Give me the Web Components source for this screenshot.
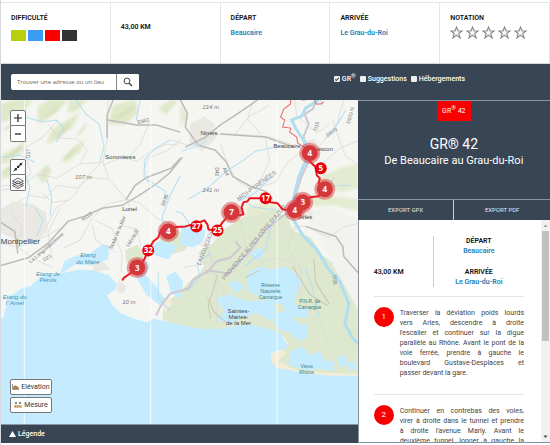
<!DOCTYPE html>
<html lang="fr">
<head>
<meta charset="utf-8">
<meta name="viewport" content="width=device-width, initial-scale=1">
<title>GR® 42 - De Beaucaire au Grau-du-Roi</title>
<style>
html,body{height:100%}
body{margin:0;background:#fff;font:8px/10px Roboto,"Liberation Sans",sans-serif;color:#111;--navy:#384554;--blue:#1c80b5;--red:#f80000;--line:#e2e4e6}
</style>
</head>
<body>
<hike-page></hike-page>
<script>
const define=(name,html,setup)=>customElements.define(name,class extends HTMLElement{
  constructor(){super();this.attachShadow({mode:'open'}).innerHTML=html;}
  connectedCallback(){if(setup)setup.call(this,this.shadowRoot);}
});

define('fact-cell',`<style>
:host{display:block;flex:1 1 0;min-width:0;box-sizing:border-box;padding:10px 10px 8px;border-right:1px solid var(--line);font-size:8px}
:host([centered]){display:flex;align-items:center;padding:0 10px 12px}
h2{font:inherit;font-weight:600;font-size:7px;margin:0 0 3px}
h2:empty{display:none}
</style><h2></h2><slot></slot>`,function(r){r.querySelector('h2').textContent=this.getAttribute('heading')||'';});

define('difficulty-scale',`<style>
:host{display:flex;gap:2px;padding-top:4px}
i{width:15px;height:11px}
</style><i style="background:#b8cf0c"></i><i style="background:#3b9af2"></i><i style="background:#f80000"></i><i style="background:#333"></i>`);

define('star-rating',`<style>
:host{display:flex;gap:3px}
svg{width:13px;height:13px;fill:none;stroke:#8c8c8c;stroke-width:1.200}
</style>`+'<svg viewBox="0 0 13 13"><path d="M6.500 1l1.500 4h4L8.800 7.500l1.300 4.200L6.500 9.200l-3.600 2.500L4.200 7.500 1 5h4z"/></svg>'.repeat(5));

define('search-box',`<style>
:host{display:block;width:128px}
form{display:flex;height:16px;margin:0;background:#fff;border-radius:2px;overflow:hidden}
input{flex:1;min-width:0;border:0;padding:0 6px;font:6px/16px "Open Sans",sans-serif;background:none;outline:0}
input::placeholder{color:#666;opacity:1}
button{width:23px;border:0;border-left:1px solid #888;padding:0;background:#fff;display:grid;place-items:center}
svg{width:10px;height:10px;fill:none;stroke:#444;stroke-width:1}
</style><form role="search"><input type="text" aria-label="Trouver une adresse ou un lieu" placeholder="Trouver une adresse ou un lieu"><button type="button" aria-label="Rechercher"><svg viewBox="0 0 10 10"><circle cx="4" cy="4" r="2.900"/><path d="M6.200 6.200L9 9" stroke-width="1.500"/></svg></button></form>`);

define('layer-toggle',`<style>
:host{display:block}
label{display:flex;align-items:center;gap:2px;color:#fff;font-size:7px;font-weight:500;white-space:nowrap}
input{appearance:none;width:6px;height:6px;margin:0;background:#eee;border-radius:1px;display:grid;place-items:center}
input:checked::after{content:"";width:3px;height:1px;border:solid #333;border-width:0 0 1px 1px;transform:rotate(-45deg)}
::slotted(sup){font-size:6px;line-height:0}
</style><label><input type="checkbox"><span><slot></slot></span></label>`,function(r){r.querySelector('input').checked=this.hasAttribute('checked');});

define('map-button',`<style>
:host{display:block}
button{font:7px/14px Roboto,sans-serif;color:#333;background:#fff;border:1px solid #777;border-radius:2px;box-sizing:border-box;width:42px;height:16px;padding:0 3px;display:flex;align-items:center;justify-content:center;gap:2px}
:host([square]) button{width:16px;padding:0}
:host([first]) button{border-radius:2px 2px 0 0}
:host([last]) button{border-radius:0 0 2px 2px;border-top:0}
::slotted(svg){flex:none;display:block}
</style><button type="button"><slot></slot></button>`,function(r){if(this.title)r.querySelector('button').setAttribute('aria-label',this.title);});

const big=[[309,153,4],[324,189,4],[302,202,3],[294,210,4],[231,212,7],[168,231,4],[137,267,3]];
const small=[[320,168,5],[265,198,17],[217,230,25],[196,226,27],[148,250,32]];
const pin=([x,y,n],b)=>`<g>${b?`<circle cx="${x}" cy="${y}" r="10.500" fill="#d73b3f" opacity=".5"/><circle cx="${x}" cy="${y}" r="8" fill="#d5383b"/>`:`<circle cx="${x}" cy="${y}" r="6" fill="#e90007"/>`}<text x="${x}" y="${y+3}" class="pin">${n}</text></g>`;

define('trail-map',`<style>
:host{display:block;position:relative;overflow:hidden;background:#c5ebff;min-height:0}
.base{position:absolute;inset:0;width:100%;height:100%;display:block}
.zoom,.tools,.measure{position:absolute;left:9px}
.zoom{top:10px}.tools{top:59px}
.measure{bottom:11px;display:grid;gap:2px}
text{font-family:"Liberation Sans",sans-serif}
.town{font-size:6px;fill:#444}.water{font-size:6px;font-style:italic;fill:#3f93b3}
.alt{font-size:6px;font-style:italic;fill:#777}.park{font-size:5px;fill:#3e8079}.ref{font-size:5px;fill:#777}
.region{font-size:6px;fill:#8f8c98}
.pin{font-family:"Open Sans",sans-serif;font-size:8px;font-weight:700;fill:#fff;text-anchor:middle}
.minor{fill:none;stroke:#dadad8;stroke-width:.8}
.road{fill:none;stroke:#bbbbb9;stroke-width:1.500}
.river{fill:none;stroke:#b4dff2;stroke-width:1}
.lake{fill:#c5ebff}
.border{fill:none;stroke:#cfc8d3;stroke-width:2}
.mid{text-anchor:middle}
</style>
<svg class="base" viewBox="1 100 356 323" preserveAspectRatio="xMidYMid slice" role="img" aria-label="Carte du GR 42">
<defs><filter id="soft" x="-20%" y="-20%" width="140%" height="140%"><feGaussianBlur stdDeviation="1.500"/></filter></defs>
<rect x="-300" y="-200" width="1000" height="1000" fill="#c5ebff"/>
<path fill="#f5f6f2" d="M-300-200H700V374H357l-27 0-20-2-25-4-13-6-1-7 4-5 9-1 3-4-7-13-15-5-20-4-24 5-21 0-25-5-21-5-5 1-1 3-14-4-14-6-8-8-5-9 9-7 1-5-8-8-14-5-16-1-18 4-16 5-16 9-12 13-12 15-13 15H-300z"/>
<g fill="#dfe8c8" filter="url(#soft)">
<path d="M1 104l12-4h20l-9 12-12 6-11 5zM38 106l12-6h18l-12 13-18 11zM52 130l15-10 13-8-7 14-15 13-12 6zM3 154l15-8 10-8-6 14-13 10-8 2zM60 160l16-14 9-8-4 12-14 12zM108 124l5-19 22-5 3 13-14 12zM3 170l17-8-8 14-11 3zM38 178l10-14 4 7-8 12zM70 100h18l-12 11-9 2zM158 108l12-8h8l-12 15z"/>
<path d="M319 176l20-8 18-5v25l-16 4-11-4-9 3zM306 196l20-1 31 4v12l-24-6-25 1zM246 205l20-3 18 8-21 5-18 3zM180 104l8 12-8 12z" opacity=".8"/>
</g>
<g fill="none" stroke="#cdd4b1" stroke-width="2" opacity=".7" filter="url(#soft)"><path d="M10 155l12-8M44 118l14-10M56 138l14-14M66 158l11-13M116 118l18-11M4 130l14-9M38 176l9-9M3 172l12-8M78 135l8-11"/></g>
<path fill="#dde8ce" d="M222 230l20-13 30-6 15 5 5 14 18 7 12 18 16 12 11 20 8 21V374H330l-20-2-25-4-13-6 0-8 13-6 2-6-7-10-15-5-20-4-24 5-21 0-25-5-13-4 2-16 16-12 8-9 12-10 4-7-6-13 15-10zM160 238l18-7 16 5-10 14-20 6-7-8zM125 250l12-6 7 9-4 12-14-4z"/>
<path fill="#f2f3ee" d="M310 224l15 24 8 18 14 25 10 18v-90l-30-12-20 6z"/>
<path fill="#f3edd8" d="M271 353l9-4 6 3-9 9 18 8 26 3 36 1v2h-28l-25-3-28-5-6-7zM160 300l8-5 4 8-7 8z"/>
<g class="lake">
<path d="M60 273l5-13 12-5 13-2 12-9 7 1-1 14-15 6-18-1-10 7zM29 287l12-11 11-4 5 7-13 5-8 6zM4 315l4-18 14-9 7-2-1 10-12 10-8 12zM132 263l14-2 4 5-5 8 11 12 8 12-3 8-15-12-9-16zM146 247l14-7 17 5-9 14-13-4zM181 226l13-2 11 6-2 11-10 6-13-3zM166 276l9-5 8 10-3 17-9-5zM247 272l12-6 12 3 14-3 10 7 6 9-5 8-1 9-9 4-16 0-6-6-16-6-2-8zM252 250l8-3 4 6-6 7-7-3zM227 283l9-3 8 6-8 7zM215 298l14-4 19 7 16-2 12 7-6 14-15-8-16 6-9 6-13-5 7-9zM278 296l9-3 8 11 13 5-2 8-18-1zM270 314l13-4 17 14 6-1 1 13-9 4-9-8-12-4zM289 351l12-5 10 9 8-5 5 10 10 1-2 9-14-2-12 2-18-6zM336 356l8-1 3 8-7 4zM346 363l7-2 3 6-7 3z"/>
</g>
<g fill="#e6e2dd"><path d="M1 209l12-8 20 3 13 8 2 18-12 12-18-2-17-8zM190 124l14-8 10 8 2 14-14 13-13-9zM302 141l12-2 5 9-7 10-9-6zM298 210l15 1-4 8-10 0zM92 262l12 0 7 7-17 2zM118 280l8 5-2 8-7-2z" opacity=".7"/></g>
<g class="minor">
<path d="M108 100l-1 38-4 24 6 17 17 20 6 12M103 162l-24 2-22 14-19-4-13 9-24 3M101 163l-14 13-13 20-18 12-10 19M80 165l7-15-9-11-18-1-12-14M109 179l-19-2-13 11-20-3-11 13-16-3-12 7M103 165l19-8 15 4 14-10 15-7 12 1M126 199l-20 5-14 14-12 22-16 7M150 120l-11 26-13 14M150 185l-8-11 6-16 18-7 15-12M1 190l20-3 10-15-8-23 20-12 15-17M69 200l-16 2-11-9M126 199l14 4 15 14 17 8M171 140l20 6 25-12 20 0 34 3 22 8M220 144l7 20 10 17 15 8 23-7 12-20 16-12M234 135l14-18 21-12M253 100l-6 19 18 20 4 22-12 25M310 155l12-13 14-18 7-24M319 166l20-18 18-7M280 240l16-14 9 0 23 11 14-10 15-4M208 240l4 28 4 18 0 35M240 220l6 32 13 8 20-2 15 5 4 27 8 18 13 14 11 26M295 224l-8 22 13 23 2 20M183 267l22-4 11-8M217 280l12 20 6 14M294 100l2 16 20 17 13-9M187 236l20 12 6 18M332 120l12 35 13 10"/>
<path d="M10 210l13 18-6 18 18 13 18 8M1 242l16 5 22-8 26-13M60 208l-12 24 5 28M95 220l17 8 10 26-1 18M122 225l15 4 4 17M115 252l-19-12-4-16"/>
</g>
<g class="road">
<path d="M-20 274l21-9 28-8 19-14 20-22 16-5 18-8 20-3 17-10 18-12 12-10 13-16M1 222l14 9 3 22M107 138l0-23 6-15M108 120l28 5 20 0 24 7M180 100l7 13-2 14 13 18 17 5 11 12 6 14 18 10 15 5 7 8M185 147l20-10 16-13 14-9 22-15M220 134l45 3 28 10M126 199l9-14 12-8 24-9 9-10M305 226l30 10 7 10 1 10 14 16"/>
</g>
<g class="river"><path d="M76 100l10 14 13 10 5 22-4 15M25 117l18 5 13-2 8 8-8 14M1 157l19-2 15 7M25 173l5 14-4 20M47 179l5 18-2 19M140 100l-4 19 4 6M170 140l-15 8-11 12 1 18 20 13-2 15M180 175l-10 20-8 21 2 16M181 151l16-5 10-5M188 199l20-12 18-16 17-11 12-9 27-6M192 228l-10-15-7-2M246 202l8 5 24 3M273 175l-19 18-16 8M35 207l8 13-6 16M158 272l0 26 12 12M210 253l-13 9 2 15-12 14M272 219l-7 30-20 16M305 268l7 20 6 28M318 300l-8 10M333 177l-5 9 21-1M345 110l-12 20-8 8M320 100l1 6"/></g>
<path class="border" d="M303 136l5-12-4-10 8-5 4-9M303 136l1 14 5 9-8 17-6 19-2 15M293 210l-10 5-19 15-14 20-22 23-20-3-15 9-5 9-18 5-10 13-4 9M235 241l5 6-10 10-14 4-10 12"/>
<path fill="none" stroke="#b0def1" stroke-width="3" d="M318 100l-13 8-4 8-10 4 5 10 9 13 2 13-9 21-6 24 0 17 10 17 14 14 12 20 11 12 9 22-4 20 8 15 10 8"/>
<g fill="none" stroke="#c9c8b0" stroke-width="1"><path d="M245 277l14-7M292 266l17 28 18 11M313 258l2 24 14 22M217 275l-9 30 2 13M207 297l7 15 11 9"/></g>
<g stroke="#fff" stroke-width="1" opacity=".75"><path d="M24.500 100v323M150.500 100v323M276.500 100v323"/></g>
<text class="town" x="105" y="159">Sommieres</text><text class="town" x="200" y="135">Nimes</text><text class="town" x="122" y="211">Lunel</text><text class="town" x="1" y="244" style="font-size:8px">Montpellier</text><text class="town" x="273" y="148">Beaucaire</text><text class="town" x="316" y="151">ascon</text><text class="town" x="298" y="219">Arles</text>
<g class="town mid"><text x="238" y="312">Saintes-</text><text x="238" y="318">Maries-</text><text x="238" y="324">de la Mer</text></g>
<g class="park mid"><text x="270" y="286">Réserve</text><text x="270" y="292">Naturelle</text><text x="270" y="298">Camargue</text><text x="309" y="302">P.N.R. de</text><text x="309" y="308">Camargue</text><text x="306" y="367">Vieux</text><text x="306" y="373">Rhône</text></g>
<g class="water mid"><text x="88" y="257">Etang</text><text x="88" y="263">du Maire</text><text x="48" y="275">Etang de</text><text x="48" y="281">Pérols</text><text x="15" y="298">Etang du</text><text x="15" y="304">l' Arnel</text></g>
<text class="alt" x="202" y="109">214 m</text><text class="alt" x="75" y="179">107 m</text><text class="alt" x="202" y="192">141 m</text><text class="alt" x="122" y="303">10 m</text>
<g class="ref"><text transform="translate(138 124) rotate(-15)">D982</text><text transform="translate(30 158) rotate(-90)">D17</text><text transform="translate(215 167) rotate(90)">D40</text><text transform="translate(222 168) rotate(65)">A54</text><text transform="translate(316 131) rotate(-75)">D15</text><text transform="translate(327 137) rotate(-35)">D570</text><text transform="translate(349 124) rotate(-75)">D570 N</text><text transform="translate(164 206) rotate(-70)">D135</text><text transform="translate(83 221) rotate(-35)">N113</text><text transform="translate(44 261) rotate(-30)">D21</text><text transform="translate(332 275) rotate(85)">D35</text><text transform="translate(31 263) rotate(-41)">La Languedocienne</text><text transform="translate(112 249) rotate(-67)">Stade de la Mer</text></g>
<g class="region"><text transform="translate(129 247) rotate(-60)">Hérault</text><text transform="translate(200 265) rotate(-69)">LANGUEDOC</text><text transform="translate(224 280) rotate(-50)">PROVENCE ALPES CÔTE D'AZUR</text><text transform="translate(238 201) rotate(-36)">MIDI-PYRÉNÉES</text></g>
<path fill="none" stroke="#e66" stroke-width="1" d="M309 153l-7-7-5-3-1-6-7-5 1-4-8-1 2-7-4-3 3-8 7-5 0-4 7-2 5 2 8-1 4 1 1 4 5 0 3-2"/>
<path fill="none" stroke="#e91820" stroke-width="2" stroke-linejoin="round" d="M122 280l2-3 6-4 7-6 7-8 4-9 5-9 5-4 3-8 7-2 17-1 11-3 8-3 3 4 1 5 9 1 5-8 9-10 8 3 4-1-2-7 2-5 4-1 2-3 8 0 8 0 5 4 7 1 5 6 11 2 8-8 6-3 2-3 9-1 4-8-4-5 1-5-3-3-1-8-6-6-4-13"/>
${big.map(p=>pin(p,true)).join('')}${small.map(p=>pin(p,false)).join('')}
</svg>
<div class="zoom"><map-button square first title="Zoom avant"><svg width="8" height="8"><path d="M4 0v8M0 4h8" stroke="#222" stroke-width="1.200"/></svg></map-button><map-button square last title="Zoom arrière"><svg width="8" height="8"><path d="M1 4h6" stroke="#222" stroke-width="1.300"/></svg></map-button></div>
<div class="tools"><map-button square first title="Itinéraire"><svg width="12" height="12"><path d="M1.500 10.500l9-9" stroke="#222" stroke-width=".800"/><path d="M3 9l1.500-1.500M5.500 6.500L7 5M8 4l1.500-1.500" stroke="#222" stroke-width="2.400"/></svg></map-button><map-button square last title="Fonds de carte"><svg width="12" height="12" fill="#fff" stroke="#444" stroke-width=".800"><path d="M.500 8.500L6 6l5.500 2.500L6 11.500zM.500 6.500L6 4l5.500 2.500L6 9.500zM.500 4L6 1l5.500 3L6 7z"/></svg></map-button></div>
<div class="measure"><map-button><svg width="7" height="6"><path d="M.500 0v5.500H7" fill="none" stroke="#999"/><path d="M1 5V3l2-2 1 1 1 0 2 2v1z" fill="#b5814c"/></svg>Elévation</map-button><map-button><svg width="8" height="8"><path d="M1 2h2M5 2h2M2 1v2M6 1v2" stroke="#555"/><path d="M0 4h8v3H0z" fill="#dfbc94"/><path d="M1.500 4v2M3.500 4v2M5.500 4v2" stroke="#a66" stroke-width=".500"/></svg>Mesure</map-button></div>`);

define('legend-bar',`<style>
:host{display:block;background:var(--navy);border-top:1px solid #8797a5}
button{display:flex;align-items:center;gap:2px;border:0;background:none;color:#fff;font:500 7px/18px Roboto,sans-serif;padding:0 8px;width:100%;text-align:left}
svg{width:7px;height:6px;fill:#fff}
</style><button type="button" aria-expanded="false"><svg viewBox="0 0 7 6"><path d="M0 6l3.500-6L7 6z"/></svg>Légende</button>`);

define('route-header',`<style>
:host{display:flex;flex-direction:column;align-items:center;background:var(--navy);color:#fff;border-top:1px solid #8793a0;text-align:center}
.tag{background:var(--red);line-height:20px;padding:0 5px;font-size:7px}
sup{font-size:6px;line-height:0}
h1{font-weight:400;font-size:14px;line-height:18px;margin:14px 0 0}
p{font-size:11px;line-height:16px;margin:0 0 30px}
nav{display:flex;align-self:stretch;border-top:1px solid #8793a0}
a{flex:1;color:#e2e5e8;text-decoration:none;font-size:6px;line-height:20px}
a+a{border-left:1px solid #ccd1d5}
</style><span class="tag">GR<sup>®</sup> 42</span><h1>GR® 42</h1><p>De Beaucaire au Grau-du-Roi</p><nav><a href="#gpx">EXPORT GPX</a><a href="#pdf">EXPORT PDF</a></nav>`);

define('route-step',`<style>
:host{display:flex;align-items:flex-start;gap:6px;border-top:1px solid var(--line);padding:10px 0 16px}
b{flex:none;width:20px;height:20px;border-radius:50%;background:var(--red);color:#fff;font:8px/20px Roboto,sans-serif;text-align:center}
p{margin:1px 0 0;flex:1;color:#444;font-size:7px;line-height:10px;text-align:justify}
</style><b></b><p><slot></slot></p>`,function(r){r.querySelector('b').textContent=this.getAttribute('number');});

define('route-summary',`<style>
:host{display:flex;align-items:center;padding:16px 0 9px;font-size:7px}
strong{flex:60 1 0;padding-top:20px;font-weight:600;font-size:7px}
div{flex:92 1 0;border-left:1px solid #ccc;text-align:center}
h3,p{font:inherit;font-weight:600;margin:0}
p+h3{margin-top:11px}
a{color:var(--blue);text-decoration:none}
</style><strong>43,00 KM</strong><div><h3>DÉPART</h3><p><a href="#depart">Beaucaire</a></p><h3>ARRIVÉE</h3><p><a href="#arrivee">Le Grau-du-Roi</a></p></div>`);

define('scroll-pane',`<style>
:host{display:flex;flex:1 1 0;min-height:0;background:#fff;border-left:1px solid #8a939b;border-bottom:1px solid #8591a5}
.view{flex:1;min-width:0;overflow-y:auto;scrollbar-width:none;padding:0 17px 0 15px}
.bar{width:9px;background:#f1f1f1;display:flex;flex-direction:column;align-items:center}
.thumb{width:7px;height:110px;background:#c1c1c1}
svg{width:9px;height:11px;flex:none}
.bar svg:last-child{margin-top:auto}
</style><div class="view" tabindex="0"><slot></slot></div><div class="bar" aria-hidden="true"><svg viewBox="0 0 9 11"><path d="M2.500 7l2-2.500 2 2.500z" fill="#999"/></svg><div class="thumb"></div><svg viewBox="0 0 9 11"><path d="M2.500 4.500l2 2.500 2-2.500z" fill="#444"/></svg></div>`);

define('hike-page',`<style>
:host{display:flex;flex-direction:column;height:100vh;box-sizing:border-box;padding:2px 0;border-left:1px solid #d5d9dc}
.facts{display:flex;border-top:1px solid var(--line);border-bottom:1px solid #d4d8da;min-height:60px}
strong{font-weight:600;font-size:7px}
fact-cell a{display:block;padding-top:2px;color:var(--blue);text-decoration:none;font-weight:600;font-size:7px}
.toolbar{display:flex;align-items:flex-start;justify-content:space-between;background:var(--navy);padding:10px 85px 10px 10px}
.layers{display:flex;gap:4px}
main{flex:1 1 0;min-height:0;display:grid;grid-template-columns:356fr 192fr}
.map{display:grid;grid-template-rows:1fr auto;min-height:0;min-width:0}
aside{display:flex;flex-direction:column;min-height:0;min-width:0}
</style>
<section class="facts">
<fact-cell heading="DIFFICULTÉ"><difficulty-scale></difficulty-scale></fact-cell>
<fact-cell centered><strong>43,00 KM</strong></fact-cell>
<fact-cell heading="DÉPART"><a href="#depart">Beaucaire</a></fact-cell>
<fact-cell heading="ARRIVÉE"><a href="#arrivee">Le Grau-du-Roi</a></fact-cell>
<fact-cell heading="NOTATION"><star-rating role="img" aria-label="0 sur 5"></star-rating></fact-cell>
</section>
<section class="toolbar"><search-box></search-box><div class="layers"><layer-toggle checked>GR<sup>®</sup></layer-toggle><layer-toggle>Suggestions</layer-toggle><layer-toggle>Hébergements</layer-toggle></div></section>
<main><div class="map"><trail-map></trail-map><legend-bar></legend-bar></div>
<aside><route-header></route-header><scroll-pane><route-summary></route-summary>
<route-step number="1">Traverser la déviation poids lourds vers&nbsp;Arles, descendre à droite l'escalier&nbsp;et continuer sur la digue parallèle au Rhône. Avant le pont de la voie&nbsp;ferrée, prendre à gauche le boulevard&nbsp;Gustave&#8209;Desplaces et passer&nbsp;devant la gare.</route-step>
<route-step number="2">Continuer en contrebas des voies, virer&nbsp;à droite dans le tunnel et prendre à&nbsp;droite l'avenue Marly. Avant le deuxième&nbsp;tunnel, longer à gauche la voie&nbsp;ferrée.</route-step>
</scroll-pane></aside></main>`);
</script>
</body>
</html>
